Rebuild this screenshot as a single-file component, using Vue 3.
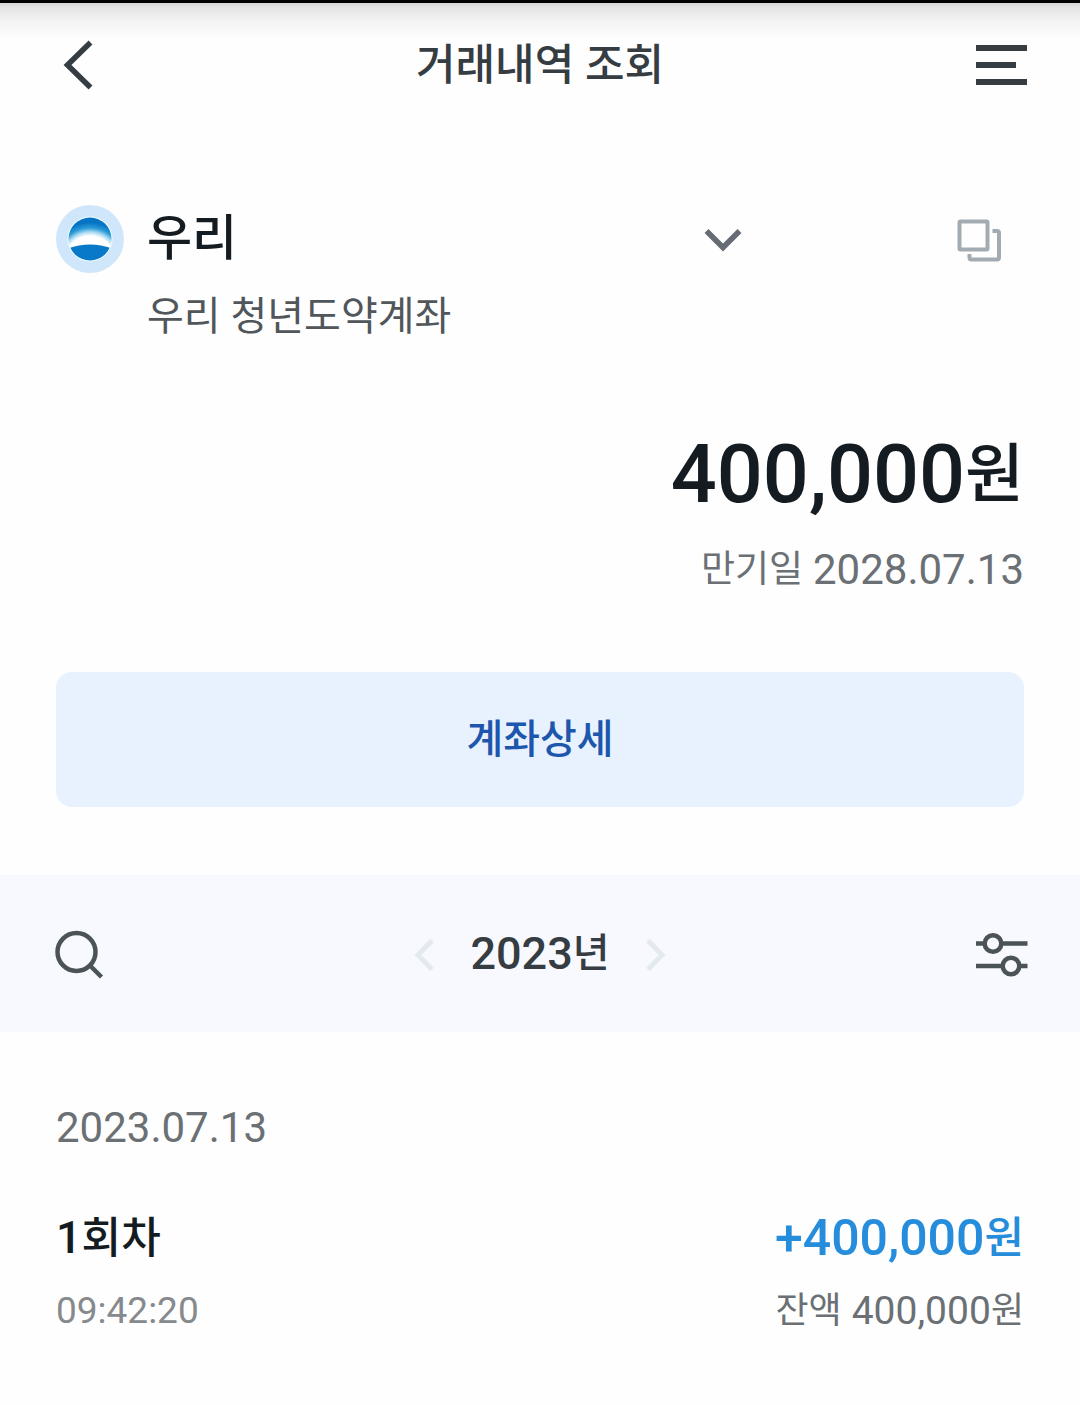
<script setup>
import { reactive, computed } from 'vue';

const account = reactive({
  bank: '우리',
  name: '우리 청년도약계좌',
  balance: 400000,
  maturity: '2028.07.13',
});

const state = reactive({
  year: 2023,
  transactions: [
    { id: 1, date: '2023.07.13', round: 1, time: '09:42:20', amount: 400000, balance: 400000 },
  ],
});

const balance = computed(() => format(account.balance));

function format(value) {
  return value.toLocaleString('en-US');
}
</script>

<template>
  <div class="page">
    <header class="header">
      <button class="icon-button" type="button" aria-label="뒤로">
        <svg width="52" height="52" viewBox="0 0 52 52" fill="none" stroke="#363d42" stroke-width="5.5">
          <path d="M38.500 3.500 15.500 26l23 22.500" />
        </svg>
      </button>
      <h1>거래내역 조회</h1>
      <button class="icon-button" type="button" aria-label="메뉴">
        <svg width="52" height="52" viewBox="0 0 52 52" fill="#363d42">
          <path d="M0 6h51v6H0zM0 23h40v6H0zM0 40h51v6H0z" />
        </svg>
      </button>
    </header>

    <main>
      <section class="account">
        <div class="account-row">
          <svg class="logo" width="68" height="68" viewBox="0 0 68 68">
            <defs>
              <radialGradient id="glow" gradientUnits="userSpaceOnUse" cx="34" cy="55.5" r="44">
                <stop offset="0.56" stop-color="#fff" />
                <stop offset="0.65" stop-color="#a5d8f2" />
                <stop offset="0.74" stop-color="#2d9bd8" />
                <stop offset="0.86" stop-color="#0674c4" />
              </radialGradient>
              <clipPath id="disc"><circle cx="34" cy="34" r="21.5" /></clipPath>
            </defs>
            <circle cx="34" cy="34" r="34" fill="#d0e7fb" />
            <circle cx="34" cy="34" r="22.5" fill="#effcff" />
            <g clip-path="url(#disc)">
              <path d="M12 12h44v44H12z" fill="url(#glow)" />
              <path d="M12 43.500q22-8 44 0v14H12z" fill="#0878c8" />
            </g>
          </svg>
          <button class="account-select" type="button">
            <span>{{ account.bank }}</span>
            <svg width="38" height="38" viewBox="0 0 38 38" fill="none" stroke="#666b74" stroke-width="5.5">
              <path d="m2.500 11 16.500 16.500L35.500 11" />
            </svg>
          </button>
          <button class="icon-button copy" type="button" aria-label="복사">
            <svg width="44" height="46" viewBox="0 0 44 46" fill="none" stroke="#a3abb2" stroke-width="4">
              <rect x="2.5" y="5.500" width="28" height="28" rx="1" />
              <path d="M35.500 15H40q2 0 2 2v24.500q0 2-2 2H14.500q-2 0-2-2V38" />
            </svg>
          </button>
        </div>
        <p class="account-name">{{ account.name }}</p>

        <p class="balance">{{ balance }}<span>원</span></p>
        <p class="maturity"><span>만기일</span>{{ account.maturity }}</p>

        <button class="detail" type="button">계좌상세</button>
      </section>

      <section class="toolbar">
        <button class="icon-button" type="button" aria-label="검색">
          <svg width="52" height="52" viewBox="0 0 52 52" fill="none" stroke="#4b5358" stroke-width="4.5">
            <circle cx="24.500" cy="24" r="19" />
            <path d="m38 37.500 11.500 11.500" />
          </svg>
        </button>
        <div class="year">
          <button class="icon-button" type="button" aria-label="이전 연도" @click="state.year--">
            <svg width="20" height="34" viewBox="0 0 20 34" fill="none" stroke="#e4e9f0" stroke-width="5">
              <path d="M18 3.500 4 18l14 14.500" />
            </svg>
          </button>
          <h2>{{ state.year }}<span>년</span></h2>
          <button class="icon-button" type="button" aria-label="다음 연도" @click="state.year++">
            <svg width="20" height="34" viewBox="0 0 20 34" fill="none" stroke="#e4e9f0" stroke-width="5">
              <path d="m2 3.500 14 14.500L2 32.500" />
            </svg>
          </button>
        </div>
        <button class="icon-button" type="button" aria-label="필터">
          <svg width="52" height="52" viewBox="0 0 52 52" fill="none" stroke="#4b5358" stroke-width="4.5">
            <path d="M0 15.500h8M26 15.500h25.500M0 38h26M43 38h8.500" />
            <circle cx="17" cy="15.500" r="8.300" />
            <circle cx="35" cy="38" r="8.300" />
          </svg>
        </button>
      </section>

      <section class="history">
        <article v-for="item in state.transactions" :key="item.id">
          <p class="date">{{ item.date }}</p>
          <div class="line main-line">
            <h3>{{ item.round }}<span>회차</span></h3>
            <strong>+{{ format(item.amount) }}<span>원</span></strong>
          </div>
          <div class="line sub-line">
            <time>{{ item.time }}</time>
            <p><span class="label">잔액</span>{{ format(item.balance) }}<span>원</span></p>
          </div>
        </article>
      </section>
    </main>
  </div>
</template>

<style>
  body {
    margin: 0;
    background-color: #fefefe;
  }
</style>

<style scoped>
  .page {
    font-family: Roboto, "Noto Sans CJK KR", sans-serif;
    color: #141c22;
  }

  h1, h2, h3, p {
    margin: 0;
    font-weight: 500;
  }

  button {
    padding: 0;
    border: none;
    background: none;
    font-family: inherit;
    color: inherit;
    cursor: pointer;
  }

  svg {
    display: block;
  }

  .header {
    display: grid;
    grid-template-columns: 1fr auto 1fr;
    align-items: center;
    height: 124px;
    padding: 0 52px;
    border-top: 3px solid #000;
    background: linear-gradient(#d4d4d4, #e4e4e4 5px, #f3f3f3 18px, #fefefe 36px);
    color: #363d42;
  }

  .header .icon-button:last-child {
    justify-self: end;
  }

  .header .icon-button:first-child {
    justify-self: start;
  }

  h1 {
    font-size: 43px;
    line-height: 56px;
  }

  .account {
    padding: 78px 56px 68px;
  }

  .account-row {
    display: flex;
    align-items: center;
  }

  .account-select {
    flex: 1;
    display: flex;
    align-items: center;
    justify-content: space-between;
    margin: 0 192px 0 23px;
    font-size: 49px;
    font-weight: 500;
    line-height: 68px;
  }

  .copy {
    padding: 0 23px;
  }

  .account-name {
    margin: 20px 0 0 91px;
    font-size: 40px;
    font-weight: 400;
    line-height: 48px;
    color: #50565a;
  }

  /* números e coreano em tamanhos diferentes, centralizados na mesma linha */
  .balance,
  .maturity,
  h2,
  h3,
  .main-line strong,
  .sub-line p {
    display: flex;
    align-items: center;
    justify-content: flex-end;
  }

  .balance {
    margin-top: 86px;
    font-size: 81px;
    line-height: 96px;
  }

  .balance span {
    font-size: 64px;
  }

  .maturity {
    gap: 10px;
    margin-top: 23px;
    font-size: 42px;
    font-weight: 400;
    line-height: 48px;
    color: #6b7074;
  }

  .maturity span {
    font-size: 37px;
  }

  .detail {
    width: 100%;
    height: 135px;
    margin-top: 78px;
    border-radius: 16px;
    background-color: #e7f2fe;
    color: #1d56ac;
    font-size: 40px;
    font-weight: 500;
    line-height: 48px;
  }

  .toolbar {
    display: flex;
    align-items: center;
    justify-content: space-between;
    height: 157px;
    padding: 0 52px;
    background-color: #f7f9fe;
  }

  .year {
    display: flex;
    align-items: center;
    gap: 36px;
    color: #363d42;
  }

  h2 {
    font-size: 45px;
    line-height: 56px;
  }

  h2 span {
    font-size: 40px;
  }

  .history {
    padding: 72px 56px;
  }

  .date {
    font-size: 42px;
    font-weight: 400;
    line-height: 48px;
    color: #6b7074;
  }

  .line {
    display: flex;
    justify-content: space-between;
  }

  .main-line {
    margin-top: 58px;
    line-height: 56px;
  }

  h3 {
    font-size: 45px;
  }

  h3 span {
    font-size: 43px;
  }

  .main-line strong {
    font-size: 50px;
    font-weight: 500;
    color: #258ddb;
  }

  .main-line strong span {
    font-size: 43px;
  }

  .sub-line {
    margin-top: 21px;
    line-height: 48px;
    color: #6b7074;
  }

  .sub-line time {
    font-size: 37px;
    color: #868a8d;
  }

  .sub-line p {
    font-size: 39px;
    font-weight: 400;
  }

  .sub-line span {
    font-size: 36px;
  }

  .label {
    margin-right: 10px;
  }
</style>
